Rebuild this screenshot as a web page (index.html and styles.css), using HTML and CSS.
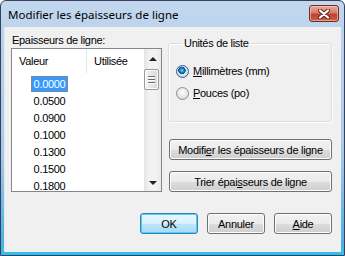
FILE: index.html
```html
<!DOCTYPE html>
<html lang="fr">
<head>
<meta charset="utf-8">
<title>Modifier les épaisseurs de ligne</title>
<link rel="stylesheet" href="styles.css">
</head>
<body>
<div class="window">
  <div class="titlebar">
    <span class="title">Modifier les épaisseurs de ligne</span>
    <div class="close">
      <svg width="14" height="10" viewBox="0 0 14 10">
        <path d="M3 1.5 L11 8.5 M11 1.5 L3 8.5" stroke="#5a2020" stroke-width="4" stroke-linecap="round"/>
        <path d="M3 1.5 L11 8.5 M11 1.5 L3 8.5" stroke="#ffffff" stroke-width="2.2" stroke-linecap="round"/>
      </svg>
    </div>
  </div>
  <div class="client">
    <div class="main">
      <div class="left">
        <div class="label">Epaisseurs de ligne:</div>
        <div class="list">
          <div class="list-body">
            <div class="header">
              <div class="hcol c1">Valeur</div>
              <div class="hcol c2">Utilisée</div>
            </div>
            <div class="row"><div class="c1"><span class="sel">0.0000</span></div></div>
            <div class="row"><div class="c1"><span>0.0500</span></div></div>
            <div class="row"><div class="c1"><span>0.0900</span></div></div>
            <div class="row"><div class="c1"><span>0.1000</span></div></div>
            <div class="row"><div class="c1"><span>0.1300</span></div></div>
            <div class="row"><div class="c1"><span>0.1500</span></div></div>
            <div class="row"><div class="c1"><span>0.1800</span></div></div>
          </div>
          <div class="scrollbar">
            <div class="sb-btn"><span class="arrow up"></span></div>
            <div class="sb-track">
              <div class="thumb"><span></span><span></span><span></span></div>
            </div>
            <div class="sb-btn"><span class="arrow down"></span></div>
          </div>
        </div>
      </div>
      <div class="right">
        <fieldset class="group">
          <legend>Unités de liste</legend>
          <div class="radio"><span class="dot checked"></span><span><u>M</u>illimètres (mm)</span></div>
          <div class="radio second"><span class="dot"></span><span><u>P</u>ouces (po)</span></div>
        </fieldset>
        <div class="btn wide first">Modifi<u>e</u>r les épaisseurs de ligne</div>
        <div class="btn wide">Trier épai<u>s</u>seurs de ligne</div>
      </div>
    </div>
    <div class="actions">
      <div class="btn default">OK</div>
      <div class="btn">Annuler</div>
      <div class="btn"><u>A</u>ide</div>
    </div>
  </div>
</div>
</body>
</html>
```

FILE: styles.css
```css
* { box-sizing: border-box; }

body {
  margin: 0;
  font-family: "Liberation Sans", Arial, sans-serif;
  font-size: 11px;
  letter-spacing: -0.3px;
  color: #000;
  background: #fff;
}

.window {
  width: 345px;
  height: 256px;
  border: 1px solid #33425a;
  border-radius: 6px 6px 0 0;
  background: linear-gradient(#c3d8ef 0px, #b9d1ea 40px, #a9c9ea 150px, #4fb0e6 240px, #2fc0ee 255px);
  padding: 0 3px 3px 3px;
  display: flex;
  flex-direction: column;
}

.titlebar {
  height: 26px;
  display: flex;
  align-items: flex-start;
  padding: 4px 2px 0 4px;
}

.title {
  font-family: "Noto Sans", "Open Sans", sans-serif;
  font-size: 11.5px;
  letter-spacing: 0;
  line-height: 16px;
  margin-top: 2px;
  color: #000;
}

.close {
  margin-left: auto;
  width: 30px;
  height: 17px;
  border: 1px solid #6e2a22;
  border-radius: 3px;
  background: linear-gradient(#e9a99c 0%, #d77a69 45%, #c2432e 55%, #c85e45 100%);
  box-shadow: inset 0 0 0 1px rgba(255, 220, 210, 0.55);
  display: flex;
  align-items: center;
  justify-content: center;
}

.client {
  flex: 1;
  background: #f0f0f0;
  border-left: 1px solid #e4eaf2;
  display: flex;
  flex-direction: column;
}

.main {
  display: flex;
  gap: 6px;
  padding: 6px 0 0 6px;
}

.left {
  width: 151px;
}

.label {
  line-height: 15px;
  height: 15px;
  padding-left: 1px;
}

.list {
  height: 144px;
  border: 1px solid #828790;
  background: #fff;
  display: flex;
}

.list-body {
  flex: 1;
}

.header {
  height: 27px;
  display: flex;
  background: #fff;
}

.hcol {
  line-height: 25px;
  padding-left: 7px;
}

.header .c1 {
  width: 75px;
  height: 24px;
  border-right: 1px solid #e3e5e8;
}

.header .c2 {
  flex: 1;
}

.row {
  height: 17px;
  display: flex;
}

.row .c1 {
  width: 75px;
  text-align: center;
  line-height: 16px;
}

.row .c1 span {
  display: inline-block;
  padding: 0 2px;
  height: 16px;
  border: 1px solid transparent;
  line-height: 14px;
}

.row .c1 span.sel {
  background: #3399ff;
  color: #fff;
  border: 1px dotted #c08040;
}

.scrollbar {
  width: 17px;
  display: flex;
  flex-direction: column;
  background: linear-gradient(90deg, #e4e4e4, #f2f2f2 30%, #f2f2f2 70%, #e8e8e8);
}

.sb-btn {
  height: 17px;
  display: flex;
  align-items: center;
  justify-content: center;
  padding-top: 3px;
}

.sb-btn:last-child {
  padding-top: 0;
  padding-bottom: 0;
}

.arrow {
  width: 0;
  height: 0;
  border-left: 4px solid transparent;
  border-right: 4px solid transparent;
}

.arrow.up { border-bottom: 4px solid #222; }
.arrow.down { border-top: 4px solid #222; }

.sb-track {
  flex: 1;
  padding: 3px 0 0 0;
}

.thumb {
  width: 15px;
  height: 21px;
  margin-left: 0;
  border: 1px solid #9a9a9a;
  border-radius: 2px;
  background: linear-gradient(90deg, #f4f4f4, #e6e6e6 50%, #d9d9d9);
  box-shadow: inset 0 0 0 1px #fbfbfb;
  display: flex;
  flex-direction: column;
  align-items: center;
  justify-content: center;
  gap: 2px;
}

.thumb span {
  width: 7px;
  height: 1px;
  background: #6d6d6d;
  box-shadow: 0 1px 0 #fff;
}

.right {
  width: 164px;
  display: flex;
  flex-direction: column;
}

.group {
  margin: 3px 0 0 0;
  padding: 13px 0 20px 7px;
  border: 1px solid #d5dfe5;
  border-radius: 3px;
  box-shadow: inset 1px 1px 0 #fff, 1px 1px 0 #fff;
  min-width: 0;
}

.group legend {
  padding: 0 2px;
  margin-left: 6px;
  line-height: 14px;
}

.radio {
  height: 16px;
  display: flex;
  align-items: center;
  gap: 4px;
}

.radio.second {
  margin-top: 6px;
}

.dot {
  width: 13px;
  height: 13px;
  border-radius: 50%;
  border: 1px solid #8e8f8f;
  background: radial-gradient(circle at 50% 40%, #ffffff 0%, #e6e6e6 55%, #cfcfcf 100%);
  flex: none;
}

.dot.checked {
  border-color: #2c628b;
  background:
    radial-gradient(circle at 45% 40%, #9ee0ff 0px, #3da4dc 1.2px, #0d5c99 3px, #0d4f86 3.5px, transparent 4px),
    radial-gradient(circle at 50% 40%, #f8fbfd 0%, #d5e3ee 60%, #b8cfe0 100%);
}

.btn {
  height: 21px;
  border: 1px solid #707070;
  border-radius: 3px;
  background: linear-gradient(#f2f2f2 0%, #ebebeb 50%, #dddddd 51%, #cfcfcf 100%);
  box-shadow: inset 0 0 0 1px #fcfcfc;
  display: flex;
  align-items: center;
  justify-content: center;
  line-height: 14px;
}

.btn.wide {
  width: 163px;
  margin-left: 1px;
  margin-top: 11px;
}

.btn.wide.first {
  margin-top: 17px;
}

.actions {
  display: flex;
  justify-content: flex-end;
  gap: 9px;
  padding: 0 9px 0 0;
  margin-top: 21px;
}

.actions .btn {
  width: 58px;
}

.btn.default {
  border-color: #3c7fb1;
  background: linear-gradient(#eaf6fd 0%, #d9f0fc 50%, #bee6fd 51%, #a7d9f5 100%);
  box-shadow: inset 0 0 0 1px #48d2f8;
}
```
